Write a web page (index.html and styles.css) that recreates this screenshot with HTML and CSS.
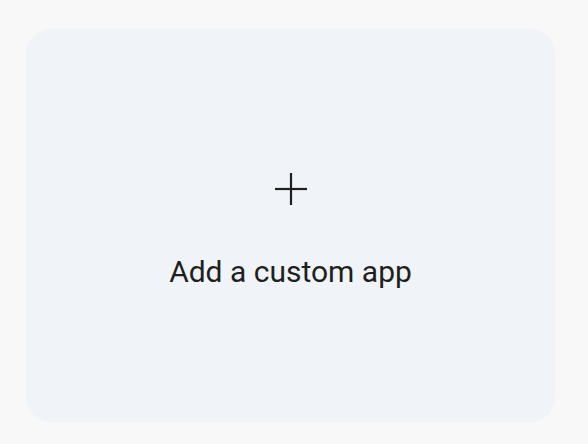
FILE: index.html
```html
<!DOCTYPE html>
<html lang="en">
<head>
    <meta charset="UTF-8">
    <meta name="viewport" content="width=device-width, initial-scale=1.0">
    <title>Add a custom app</title>
    <link rel="stylesheet" href="styles.css">
</head>
<body>
    <div class="page">
        <button class="add-card">
            <svg class="add-icon" width="34" height="34" viewBox="0 0 34 34">
                <line x1="17" y1="1" x2="17" y2="33" stroke="#1f1f1f" stroke-width="2.2"/>
                <line x1="1" y1="17" x2="33" y2="17" stroke="#1f1f1f" stroke-width="2.2"/>
            </svg>
            <span class="add-label">Add a custom app</span>
        </button>
    </div>
</body>
</html>
```

FILE: styles.css
```css
body {
    margin: 0;
    background-color: #f8f8f8;
    font-family: Roboto, "Open Sans", sans-serif;
}
.page {
    padding: 29px 33px 22px 26px;
}
.add-card {
    display: flex;
    flex-direction: column;
    align-items: center;
    justify-content: center;
    width: 529px;
    height: 393px;
    border: none;
    border-radius: 26px;
    background-color: #f0f4f9;
    box-shadow: 0 0 2px rgba(0,0,0,0.04);
    padding: 10px 0 0 0;
    font-family: inherit;
    cursor: pointer;
}
.add-icon {
    display: block;
    margin-bottom: 48px;
}
.add-label {
    font-size: 30px;
    line-height: 36px;
    color: #1f1f1f;
    letter-spacing: 0;
}
```
